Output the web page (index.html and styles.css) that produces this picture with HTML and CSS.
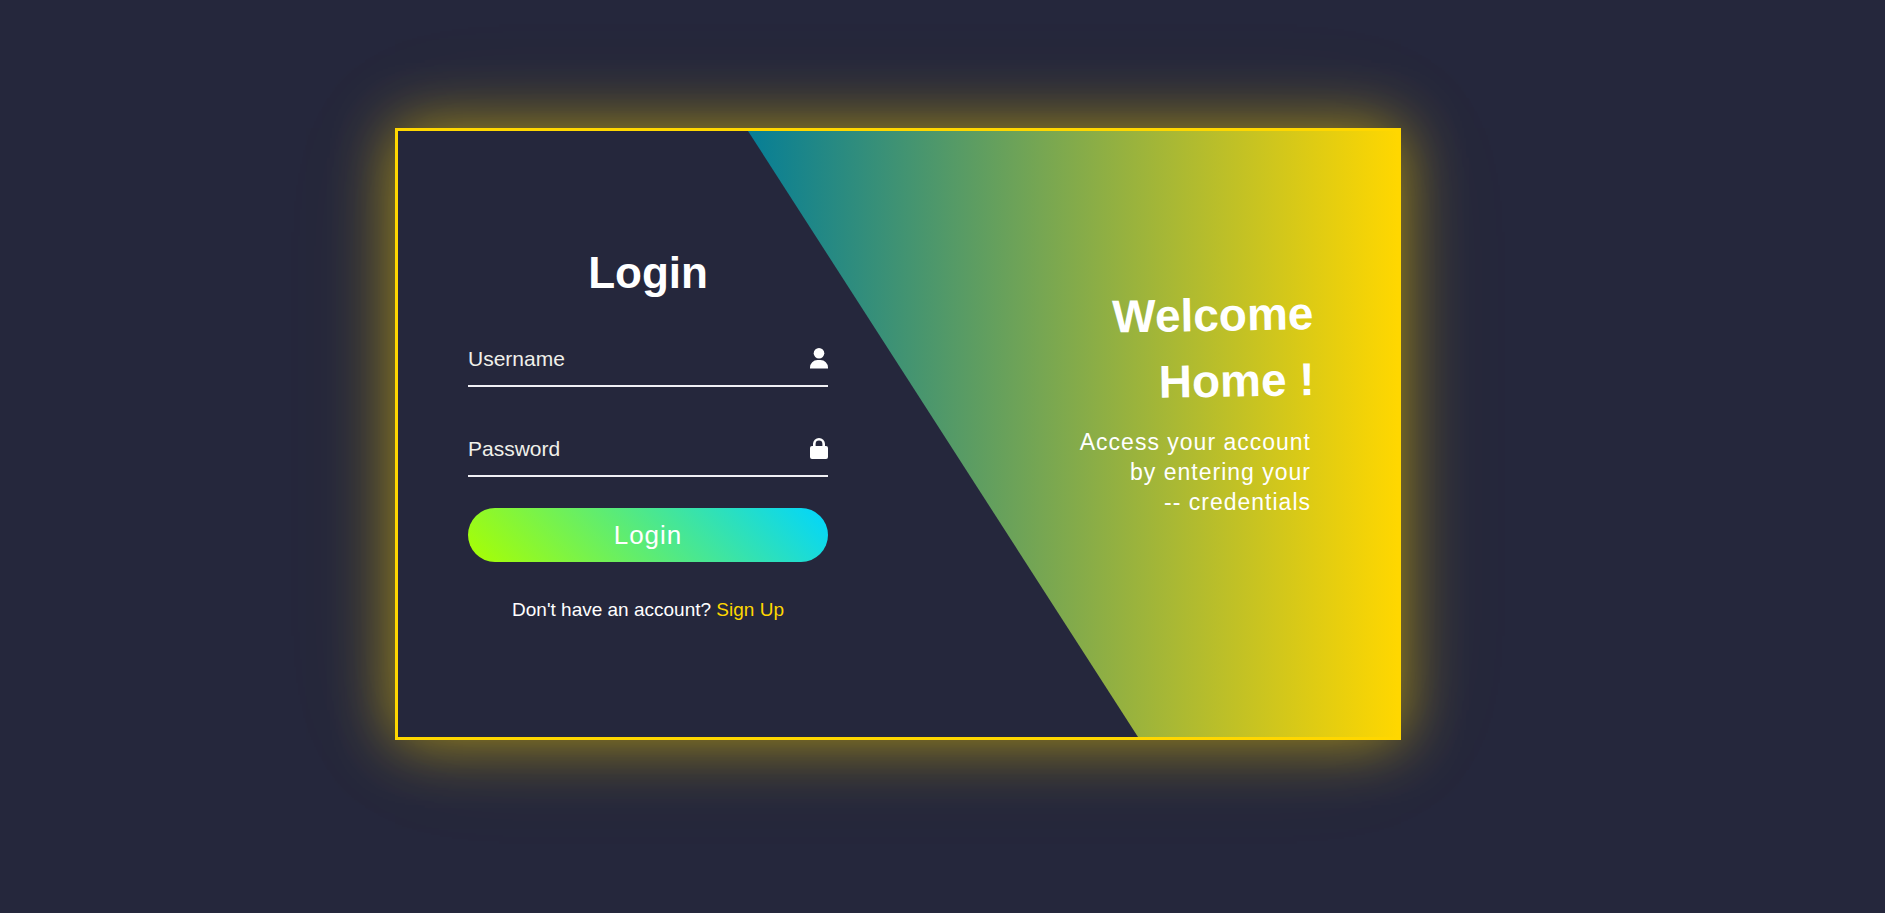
FILE: index.html
```html
<!DOCTYPE html>
<html lang="en">
<head>
<meta charset="utf-8">
<meta name="viewport" content="width=device-width, initial-scale=1">
<title>Login</title>
<link rel="stylesheet" href="styles.css">
</head>
<body>
<main class="card">
  <form class="login">
    <h1 class="login-title">Login</h1>
    <div class="field">
      <input class="field-input" id="username" type="text" placeholder="Username" aria-label="Username">
      <label class="field-icon" for="username">
        <svg viewBox="0 0 18 21" width="18" height="21" aria-hidden="true"><circle cx="9" cy="5.3" r="5.3"/><path d="M0 20.6v-1.1a7.5 7.5 0 0 1 7.5-7.5h3a7.5 7.5 0 0 1 7.5 7.5v1.1z"/></svg>
      </label>
    </div>
    <div class="field">
      <input class="field-input" id="password" type="password" placeholder="Password" aria-label="Password">
      <label class="field-icon" for="password">
        <svg viewBox="0 0 18 21" width="18" height="21" aria-hidden="true"><path d="M16 8h-1V6A6 6 0 0 0 3 6v2H2a2 2 0 0 0-2 2v9a2 2 0 0 0 2 2h14a2 2 0 0 0 2-2v-9a2 2 0 0 0-2-2zM5.6 8V6a3.4 3.4 0 0 1 6.8 0v2z"/></svg>
      </label>
    </div>
    <button class="login-button" type="submit">Login</button>
    <p class="signup">Don't have an account? <a class="signup-link" href="#">Sign Up</a></p>
  </form>
  <section class="welcome">
    <h2 class="welcome-title">Welcome<br>Home !</h2>
    <p class="welcome-text">Access your account<br>by entering your<br>-- credentials</p>
  </section>
</main>
</body>
</html>
```

FILE: styles.css
```css
* {
  box-sizing: border-box;
  margin: 0;
  padding: 0;
}

body {
  min-height: 100vh;
  display: flex;
  align-items: center;
  justify-content: center;
  padding: 0 89px 45px 0;
  background: #25273c;
  color: #fff;
  font-family: "Liberation Sans", Arial, sans-serif;
}

.card {
  width: 100%;
  max-width: 1006px;
  display: grid;
  grid-template-columns: 35fr 65fr;
  border: 3px solid #ffd700;
  box-shadow: 0 0 60px rgba(255, 215, 0, 0.6), 0 0 120px rgba(255, 215, 0, 0.08);
}

.login {
  grid-area: 1 / 1 / 2 / 3;
  z-index: 1;
  width: 50%;
  padding: 112px 70px 113px 70px;
  display: flex;
  flex-direction: column;
}

.login-title {
  font-size: 44px;
  line-height: 60px;
  text-align: center;
  margin-bottom: 23px;
}

.field {
  display: flex;
  align-items: center;
  height: 61px;
  padding-top: 6px;
  border-bottom: 2px solid #f0eff4;
}

.field + .field {
  margin-top: 29px;
}

.field-input {
  flex: 1;
  min-width: 0;
  height: 100%;
  border: 0;
  outline: 0;
  background: transparent;
  color: #fff;
  font: 21px "Liberation Sans", Arial, sans-serif;
}

.field-input::placeholder {
  color: #f0f0ea;
  opacity: 1;
}

.field-icon {
  display: flex;
}

.field-icon svg {
  fill: #fff;
}

.login-button {
  height: 54px;
  margin-top: 31px;
  border: 0;
  border-radius: 27px;
  background: linear-gradient(45deg, #aaff00, #00d5ff);
  color: #fff;
  font: 26px "Liberation Sans", Arial, sans-serif;
  letter-spacing: 1px;
  cursor: pointer;
}

.signup {
  margin-top: 34px;
  font-size: 19px;
  line-height: 28px;
  text-align: center;
}

.signup-link {
  color: #ffd700;
  text-decoration: none;
}

.welcome {
  grid-area: 1 / 2 / 2 / 3;
  padding: 154px 84px 0 0;
  text-align: right;
  background: linear-gradient(90deg, #067e96, #ffd700);
  clip-path: polygon(0 0, 100% 0, 100% 100%, 60% 100%);
}

.welcome-title {
  font-size: 46px;
  line-height: 66px;
  transform: rotate(-1deg);
}

.welcome-text {
  margin-top: 10px;
  padding-right: 3px;
  font-size: 23px;
  line-height: 30px;
  letter-spacing: 1px;
}
```
